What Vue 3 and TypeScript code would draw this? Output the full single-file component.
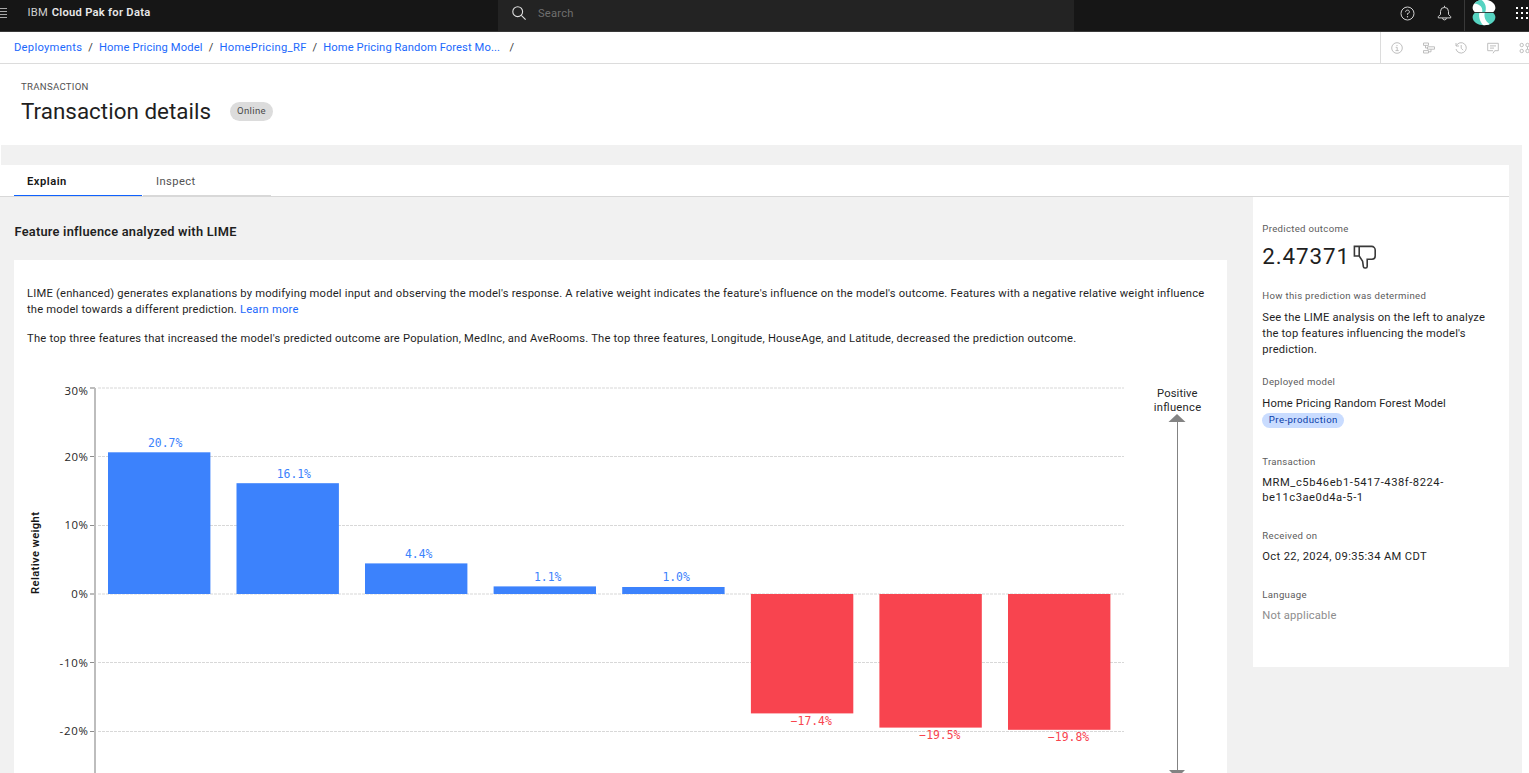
<script setup lang="ts">
interface Crumb { label: string; cls: string }
interface Bar { x: number; edge: number; label: string; labelX: number; labelY: number }
interface Tick { y: number; label: string; labelY: number; width: number; thick: boolean }

const crumbs: Crumb[] = [
  { label: 'Deployments', cls: 'crumb-deployments' },
  { label: 'Home Pricing Model', cls: 'crumb-model' },
  { label: 'HomePricing_RF', cls: 'crumb-rf' },
  { label: 'Home Pricing Random Forest Mo...', cls: 'crumb-forest' },
]

const zeroY = 594
const barWidth = 102.4
const bars: Bar[] = [
  { x: 108, edge: 452.3, label: '20.7%', labelX: 148, labelY: 447 },
  { x: 236.5, edge: 483.2, label: '16.1%', labelX: 276.7, labelY: 478 },
  { x: 365, edge: 563.4, label: '4.4%', labelX: 405, labelY: 558 },
  { x: 493.6, edge: 586.4, label: '1.1%', labelX: 534, labelY: 581 },
  { x: 622.2, edge: 587, label: '1.0%', labelX: 662.4, labelY: 581 },
  { x: 750.9, edge: 713.4, label: '−17.4%', labelX: 790.7, labelY: 725 },
  { x: 879.4, edge: 727.6, label: '−19.5%', labelX: 919.3, labelY: 739 },
  { x: 1008, edge: 729.8, label: '−19.8%', labelX: 1048, labelY: 741 },
]

const ticks: Tick[] = [
  { y: 388, label: '30%', labelY: 395, width: 23.5, thick: true },
  { y: 456.5, label: '20%', labelY: 461, width: 23.5, thick: false },
  { y: 525.5, label: '10%', labelY: 529, width: 23.5, thick: false },
  { y: 594, label: '0%', labelY: 598, width: 16.7, thick: true },
  { y: 662.5, label: '-10%', labelY: 667, width: 28.5, thick: false },
  { y: 731.5, label: '-20%', labelY: 735, width: 28.5, thick: false },
]

const dotGrid = [0, 5, 10]
</script>

<template>
  <div class="page">
    <header class="topbar">
      <svg class="menu" width="8" height="20" viewBox="0 0 8 20">
        <path d="M0 4.5h7M0 7.5h7M0 10.5h7M0 13.5h7" stroke="#a8a8a8" stroke-width="1" />
      </svg>
      <div class="brand"><span class="ibm">IBM</span><b>Cloud Pak for Data</b></div>
      <div class="search">
        <svg width="14" height="14" viewBox="0 0 14 14" fill="none" stroke="#e0e0e0" stroke-width="1.1">
          <circle cx="5.7" cy="5.7" r="4.9" /><path d="M9.3 9.3 13.6 13.6" />
        </svg>
        <span>Search</span>
      </div>
      <div class="top-actions">
        <svg class="help" width="15" height="15" viewBox="0 0 15 15" fill="none" stroke="#d0d0d0" stroke-width="1">
          <circle cx="7.5" cy="7.5" r="6.5" />
          <path d="M5.6 6.1V5.8c0-1 .8-1.7 1.9-1.7s1.9.7 1.9 1.7-.8 1.7-1.9 1.7v1.3" />
          <circle cx="7.5" cy="10.7" r=".7" fill="#d0d0d0" stroke="none" />
        </svg>
        <svg class="bell" width="15" height="16" viewBox="0 0 15 16" fill="none" stroke="#d0d0d0" stroke-width="1">
          <path d="M7.5 .8v1.6M7.5 2.4a4 4 0 0 0-4 4v3L1.3 11.6v1.3h12.4v-1.3L11.5 9.4v-3a4 4 0 0 0-4-4ZM5.6 13a1.9 1.9 0 0 0 3.8 0" />
        </svg>
        <span class="top-divider"></span>
        <svg class="avatar" width="24" height="26" viewBox="0 0 24 26">
          <defs>
            <clipPath id="avatarTop"><path d="M3 12.200C-1 9 .5 4.500 4 2 8-1 16-1 20 2c3.500 2.500 5 7 1 10.200Z" /></clipPath>
            <clipPath id="avatarBottom"><path d="M3 12.800C-1 16 .5 20.500 4 23c4 3 12 3 16 0 3.500-2.500 5-7 1-10.200Z" /></clipPath>
          </defs>
          <g clip-path="url(#avatarTop)">
            <rect width="24" height="13" fill="#fff" />
            <path d="M1 0H9.500C13.500 2.500 15 8 13 13H10C11.500 8 8.500 4 2 3.500Z" fill="#56d3c1" />
          </g>
          <g clip-path="url(#avatarBottom)">
            <rect y="12" width="24" height="14" fill="#56d3c1" />
            <path d="M7.500 12H13c-1.500 4 0 9 4.500 12V26H12C8.500 23 6 17 7.500 12Z" fill="#fff" />
          </g>
          <path d="M3 12.500H21" fill="none" stroke="#161616" stroke-width=".6" />
        </svg>
        <svg class="apps" width="13" height="12" viewBox="0 0 13 12" fill="#fff">
          <template v-for="x in dotGrid" :key="x">
            <rect v-for="y in dotGrid" :key="y" :x="x" :y="y" width="2" height="2" />
          </template>
        </svg>
      </div>
    </header>

    <nav class="breadcrumbs">
      <template v-for="c in crumbs" :key="c.label">
        <a :class="c.cls">{{ c.label }}</a><span class="slash">/</span>
      </template>
      <div class="tools">
        <svg viewBox="0 0 12 12"><circle cx="6" cy="6" r="5.3" /><path d="M4.7 5.3H6.2v3.2M4.5 8.6h3.2M5.5 3.5h1" /></svg>
        <svg viewBox="0 0 12 12"><path d="M.5 1h5v2.4h-5zM4.5 4.8h7v2.4h-7zM.5 8.6h5V11h-5zM2.5 3.4V6h2M8 7.2v2.600H5.500" /></svg>
        <svg viewBox="0 0 12 12"><path d="M1 1v3h3M1.300 3.800A5.200 5.200 0 1 1 1 7M6.200 3v3.300l2 1.900" /></svg>
        <svg viewBox="0 0 12 12"><path d="M.7 1.300h10.600v7.400H7.700L6 11.300M6 8.700H.7V1.300M3 3.900h6M3 6.100h4" /></svg>
        <svg viewBox="0 0 12 12"><circle cx="2.700" cy="3" r="1.700" /><circle cx="8.500" cy="3" r="1.700" /><circle cx="2.700" cy="9" r="1.700" /><circle cx="8.500" cy="9" r="1.700" /><path d="M8.500 4.700v2.600" /></svg>
      </div>
    </nav>

    <section class="heading">
      <div class="eyebrow">TRANSACTION</div>
      <div class="title-row">
        <h1>Transaction details</h1>
        <span class="status">Online</span>
      </div>
    </section>

    <main class="body">
      <div class="strip"></div>
      <div class="tabs">
        <div class="tab active">Explain</div>
        <div class="tab">Inspect</div>
      </div>
      <div class="columns">
        <div class="main-col">
          <h2>Feature influence analyzed with LIME</h2>
          <div class="card">
            <p>
              LIME (enhanced) generates explanations by modifying model input and observing the model's response. A relative weight indicates the feature's influence on the model's outcome. Features with a negative relative weight influence<br />the model towards a different prediction. <a>Learn more</a>
            </p>
            <p>
              The top three features that increased the model's predicted outcome are Population, MedInc, and AveRooms. The top three features, Longitude, HouseAge, and Latitude, decreased the prediction outcome.
            </p>
            <svg class="chart" width="1213" height="412" viewBox="14 361 1213 412">
              <g v-for="t in ticks" :key="t.label">
                <line x1="98" x2="1124" :y1="t.y" :y2="t.y" class="grid" :class="{ soft: t.thick }" />
                <line x1="90" x2="95" :y1="t.y" :y2="t.y" class="tick" :class="{ soft: t.thick }" />
                <text :x="88 - t.width" :y="t.labelY" :textLength="t.width" class="axis-label">{{ t.label }}</text>
              </g>
              <line x1="95" x2="95" y1="388" y2="773" stroke="#bdbdbd" stroke-width="2" />
              <g v-for="b in bars" :key="b.label" :class="b.edge < zeroY ? 'positive' : 'negative'">
                <rect :x="b.x" :y="Math.min(b.edge, zeroY)" :width="barWidth" :height="Math.abs(zeroY - b.edge)" />
                <text :x="b.labelX" :y="b.labelY" class="value">{{ b.label }}</text>
              </g>
              <text class="y-title" transform="translate(39.3 594) rotate(-90)" textLength="82">Relative weight</text>
              <text class="side-text" x="1157" y="397" textLength="40.5">Positive</text>
              <text class="side-text" x="1153.7" y="411" textLength="47.5">influence</text>
              <path d="M1177 414l8.5 8h-17zM1169 770h16l-8 8z" fill="#838383" />
              <path d="M1177.5 420V773" stroke="#838383" />
            </svg>
          </div>
        </div>

        <aside class="details">
          <div class="label">Predicted outcome</div>
          <div class="outcome">
            <span>2.47371</span>
            <svg viewBox="0 0 32 32" fill="#393939">
              <path d="M30 15V7.500A5.500 5.500 0 0 0 24.500 2H2v14h6.400l3.900 5.800.9 6.500A3 3 0 0 0 16.200 31H17a3 3 0 0 0 3-3v-8h5a5 5 0 0 0 5-5ZM8 14H4V4h4Zm20 1a3 3 0 0 1-3 3h-7v10a1 1 0 0 1-1 1h-.8a1 1 0 0 1-1-.9l-1-6.900L10 14.700V4h14.500A3.500 3.500 0 0 1 28 7.500Z" />
            </svg>
          </div>
          <div class="label how">How this prediction was determined</div>
          <div class="text">See the LIME analysis on the left to analyze<br />the top features influencing the model's<br />prediction.</div>
          <div class="label deployed">Deployed model</div>
          <div class="text model-name">Home Pricing Random Forest Model</div>
          <span class="stage">Pre-production</span>
          <div class="label transaction">Transaction</div>
          <div class="text txn-id">MRM_c5b46eb1-5417-438f-8224-<br />be11c3ae0d4a-5-1</div>
          <div class="label received">Received on</div>
          <div class="text date">Oct 22, 2024, 09:35:34 AM CDT</div>
          <div class="label language">Language</div>
          <div class="text muted">Not applicable</div>
        </aside>
      </div>
    </main>
  </div>
</template>

<style>
body {
  background: #fff;
}
</style>

<style scoped>
.page {
  width: 1529px;
  height: 773px;
  overflow: hidden;
  background: #fff;
  color: #1f1f1f;
  font-family: Roboto, sans-serif;
  font-size: 11.2px;
  display: flex;
  flex-direction: column;
}
.page * {
  box-sizing: border-box;
}
.topbar {
  flex: none;
  height: 32px;
  background: #161616;
  border-bottom: 1px solid #393939;
  display: flex;
  align-items: flex-start;
}
.menu {
  flex: none;
  margin: 4px 19.5px 0 0;
}
.brand {
  width: 470.5px;
  line-height: 26px;
  color: #e8e8e8;
  letter-spacing: 0.28px;
  white-space: pre;
}
.ibm {
  margin-right: 3.5px;
  color: #d0d0d0;
}
.brand b {
  font-weight: 600;
}
.search {
  width: 576px;
  height: 31px;
  background: #232323;
  color: #6f6f6f;
  display: flex;
  padding: 6px 0 0 13.5px;
  gap: 12.5px;
  line-height: 16px;
  letter-spacing: 0.2px;
}
.top-actions {
  flex: 1;
  height: 31px;
  display: flex;
}
.help {
  margin: 5.5px 0 0 325.5px;
}
.bell {
  margin: 5px 0 0 22.5px;
}
.top-divider {
  width: 1px;
  background: #393939;
  margin-left: 12px;
}
.avatar {
  margin-left: 6.5px;
}
.apps {
  margin: 7px 0 0 20.5px;
}
.top-actions svg {
  flex: none;
}
.breadcrumbs {
  flex: none;
  height: 32px;
  border-bottom: 1px solid #dcdcdc;
  padding-left: 14px;
  display: flex;
  line-height: 31px;
  white-space: nowrap;
}
a {
  color: #1c69fc;
}
.crumb-deployments {
  width: 68px;
  letter-spacing: 0.28px;
}
.crumb-model {
  width: 103.5px;
  letter-spacing: 0.12px;
}
.crumb-rf {
  width: 86.7px;
  letter-spacing: 0.31px;
}
.crumb-forest {
  width: 177px;
  margin-right: 3px;
  letter-spacing: 0.09px;
}
.slash {
  width: 17px;
  text-align: center;
  color: #393939;
}
.tools {
  margin-left: auto;
  width: 149px;
  border-left: 1px solid #dcdcdc;
  display: flex;
  align-items: center;
  gap: 20px;
  padding-left: 10.3px;
  overflow: hidden;
}
.tools svg {
  flex: none;
  width: 12px;
  height: 12px;
  fill: none;
  stroke: #b8b8b8;
  stroke-width: 0.9;
}
.heading {
  flex: none;
  height: 81px;
  padding: 16px 0 0 21px;
}
.eyebrow {
  font-size: 9.6px;
  line-height: 14px;
  letter-spacing: 0.29px;
  color: #525252;
}
.title-row {
  display: flex;
  align-items: center;
  height: 28px;
  margin-top: 3px;
}
h1 {
  margin: 0;
  width: 209px;
  font-size: 22.4px;
  font-weight: 400;
  line-height: 28px;
  letter-spacing: 0.02px;
}
.status {
  width: 43px;
  height: 19px;
  border-radius: 10px;
  background: #dcdcdc;
  color: #4a4a4a;
  font-size: 9.6px;
  line-height: 18px;
  letter-spacing: 0.34px;
  text-align: center;
}
.body {
  flex: 1;
  width: 1522px;
  background: #f1f1f1;
}
.strip {
  height: 20px;
  border-left: 1px solid #fff;
}
.tabs {
  width: 1509px;
  height: 32px;
  padding-left: 14px;
  background: #fff;
  border-bottom: 1px solid #d8d8d8;
  display: flex;
  gap: 1px;
}
.tab {
  width: 128px;
  height: 31px;
  padding: 1px 0 0 13px;
  line-height: 32px;
  letter-spacing: 0.4px;
  color: #525252;
  border-bottom: 1px solid #d8d8d8;
}
.tab.active {
  color: #161616;
  font-weight: 600;
  letter-spacing: 0.5px;
  border-bottom-color: #0f62fe;
}
.columns {
  display: flex;
  align-items: flex-start;
  gap: 26px;
  padding-left: 14px;
}
.main-col {
  width: 1213px;
}
h2 {
  margin: 24px 0 0;
  height: 39px;
  padding-left: 0.5px;
  font-size: 12.8px;
  font-weight: 600;
  line-height: 21px;
  letter-spacing: 0.24px;
}
.card {
  background: #fff;
  padding-top: 26px;
}
.card p {
  margin: 0 0 13px;
  padding-left: 13px;
  line-height: 16px;
  letter-spacing: 0.2px;
  white-space: nowrap;
}
.card p + p {
  margin-bottom: 14px;
  letter-spacing: 0.212px;
}
.chart {
  display: block;
}
.grid {
  stroke: #d8d8d8;
  stroke-width: 1;
  stroke-dasharray: 3 1;
}
.grid.soft {
  stroke: #ebebeb;
  stroke-width: 2;
}
.tick {
  stroke: #8d8d8d;
}
.tick.soft {
  stroke: #bdbdbd;
  stroke-width: 2;
}
.axis-label {
  font-family: "Open Sans", sans-serif;
  font-size: 11.4px;
  fill: #262626;
}
.side-text {
  font-size: 11.2px;
  fill: #262626;
}
.y-title {
  font-size: 11.2px;
  font-weight: 600;
  fill: #161616;
}
.value {
  font-family: "DejaVu Sans Mono", monospace;
  font-size: 11.4px;
}
.positive {
  fill: #3c82fc;
}
.negative {
  fill: #f8444f;
}
.details {
  width: 256px;
  height: 470px;
  padding: 25px 0 0 9.3px;
  background: #fff;
}
.label {
  font-size: 9.6px;
  line-height: 14px;
  letter-spacing: 0.31px;
  color: #5c5c5c;
}
.outcome {
  display: flex;
  height: 28px;
  margin-top: 6px;
  font-size: 22.4px;
  line-height: 28px;
  letter-spacing: 0.9px;
}
.outcome span {
  width: 89.5px;
}
.outcome svg {
  width: 25.6px;
  height: 25.6px;
  margin-top: 2px;
}
.how {
  margin-top: 19px;
}
.text {
  margin-top: 7px;
  line-height: 16px;
  letter-spacing: 0.19px;
}
.deployed {
  margin-top: 17px;
}
.model-name {
  letter-spacing: 0.11px;
}
.stage {
  display: block;
  width: 82px;
  height: 15px;
  margin-top: 1px;
  border-radius: 8px;
  background: #c9dcff;
  color: #0a3da8;
  font-size: 9.6px;
  line-height: 14px;
  letter-spacing: 0.43px;
  text-align: center;
}
.transaction {
  margin-top: 27px;
  letter-spacing: 0.26px;
}
.txn-id {
  margin-top: 6px;
  line-height: 15px;
  letter-spacing: 0.54px;
}
.received {
  margin-top: 24px;
}
.date {
  margin-top: 6px;
  letter-spacing: 0.35px;
}
.language {
  margin-top: 23px;
}
.muted {
  margin-top: 6px;
  letter-spacing: 0.18px;
  color: #8d8d8d;
}
</style>
